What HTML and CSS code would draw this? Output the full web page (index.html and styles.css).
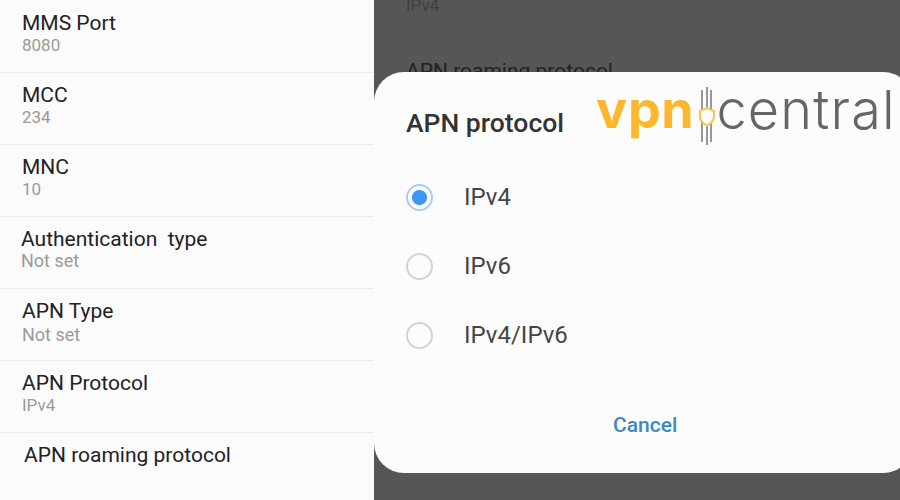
FILE: index.html
```html
<!DOCTYPE html>
<html lang="en">
<head>
    <meta charset="UTF-8">
    <meta name="viewport" content="width=device-width, initial-scale=1.0">
    <title>APN protocol</title>
    <link rel="stylesheet" href="styles.css">
</head>
<body>
    <main class="screen">
        <section class="settings">
            <div class="settings__row"><h2>MMS Port</h2><p>8080</p></div>
            <div class="settings__row"><h2>MCC</h2><p>234</p></div>
            <div class="settings__row"><h2>MNC</h2><p>10</p></div>
            <div class="settings__row settings__row--auth"><h2>Authentication&nbsp; type</h2><p class="settings__wide">Not set</p></div>
            <div class="settings__row settings__row--type"><h2>APN Type</h2><p class="settings__wide">Not set</p></div>
            <div class="settings__row"><h2>APN Protocol</h2><p>IPv4</p></div>
            <div class="settings__row settings__row--last"><h2>APN roaming protocol</h2></div>
        </section>

        <section class="backdrop">
            <p class="backdrop__value">IPv4</p>
            <h2 class="backdrop__title">APN roaming protocol</h2>

            <div class="dialog">
                <h1 class="dialog__title">APN protocol</h1>
                <ul class="dialog__options">
                    <li><span class="radio radio--on"></span>IPv4</li>
                    <li><span class="radio"></span>IPv6</li>
                    <li><span class="radio"></span>IPv4/IPv6</li>
                </ul>
                <button class="dialog__cancel">Cancel</button>
            </div>

            <div class="logo">
                <span class="logo__vpn">vpn</span>
                <svg class="logo__mark" width="20" height="58" viewBox="0 0 20 58">
                    <path d="M6 3V55M11 0V58M15 3V55" stroke="#77777a" stroke-width="1.500" fill="none"/>
                    <path d="M11 21L18 24V30C18 34 15 36 11 38.500C7 36 4 34 4 30V24Z" stroke="#f5c55a" stroke-width="2" fill="#fffdf6"/>
                </svg>
                <span class="logo__central">central</span>
            </div>
        </section>
    </main>
</body>
</html>
```

FILE: styles.css
```css
* {
    box-sizing: border-box;
}

html, body {
    margin: 0;
    height: 100%;
    overflow: hidden;
}

body {
    font-family: Roboto, 'Liberation Sans', sans-serif;
}

h1, h2, p, ul {
    margin: 0;
    padding: 0;
}

.screen {
    display: flex;
    width: 900px;
    height: 500px;
    overflow: hidden;
}

.settings {
    width: 374px;
    padding-top: 1px;
    background-color: #fbfbfb;
}

.settings__row {
    height: 72px;
    padding: 11px 0 0 22px;
    border-bottom: 1px solid #ececec;
}

.settings__row h2 {
    font-size: 21px;
    line-height: 22px;
    font-weight: 400;
    color: #222;
}

.settings__row p {
    font-size: 17px;
    line-height: 22px;
    color: #9a9a9a;
}

.settings__row .settings__wide {
    font-size: 18px;
}

.settings__row--auth {
    padding-left: 21px;
}

.settings__row--type p {
    margin-top: 2px;
}

.settings__row--last {
    padding-left: 24px;
    border-bottom: none;
}

.backdrop {
    position: relative;
    flex: 1;
    background-color: #565656;
    padding-left: 32px;
}

.backdrop__value {
    margin-top: -5px;
    font-size: 17px;
    line-height: 20px;
    color: #3f3f3f;
}

.backdrop__title {
    margin-top: 44px;
    font-size: 21px;
    line-height: 24px;
    font-weight: 400;
    color: #222;
}

.dialog {
    position: absolute;
    top: 72px;
    left: 0;
    width: 539px;
    height: 401px;
    padding: 37px 0 0 32px;
    display: flex;
    flex-direction: column;
    background-color: #fcfcfc;
    border-radius: 30px;
}

.dialog__title {
    font-size: 26.500px;
    line-height: 28px;
    font-weight: 500;
    color: #333;
}

.dialog__options {
    margin-top: 46px;
    list-style: none;
    display: flex;
    flex-direction: column;
    gap: 41px;
}

.dialog__options li {
    display: flex;
    align-items: center;
    gap: 31px;
    height: 28px;
    font-size: 24px;
    color: #454545;
}

.radio {
    width: 27px;
    height: 27px;
    border: 2px solid #d2d2d2;
    border-radius: 50%;
    background-color: #fcfcfc;
}

.radio--on {
    border-color: #a9cdf2;
    background: radial-gradient(circle, #3f95f6 0 7px, #fcfcfc 8px);
}

.dialog__cancel {
    align-self: flex-start;
    margin: 64px 0 0 207px;
    padding: 0;
    border: none;
    background: none;
    font-family: inherit;
    font-size: 21px;
    line-height: 24px;
    font-weight: 500;
    color: #3b8ac4;
}

.logo {
    position: absolute;
    top: 87px;
    left: 222px;
    display: flex;
    align-items: center;
    height: 58px;
    line-height: 58px;
    font-family: Inter, 'Open Sans', sans-serif;
}

.logo__vpn {
    padding-bottom: 12px;
    font-size: 52px;
    font-weight: 700;
    letter-spacing: 0.700px;
    color: #fdb72d;
}

.logo__mark {
    margin-left: 2px;
    flex-shrink: 0;
}

.logo__central {
    padding-bottom: 12px;
    font-size: 54px;
    font-weight: 300;
    letter-spacing: 1.200px;
    color: #66666a;
}
```
